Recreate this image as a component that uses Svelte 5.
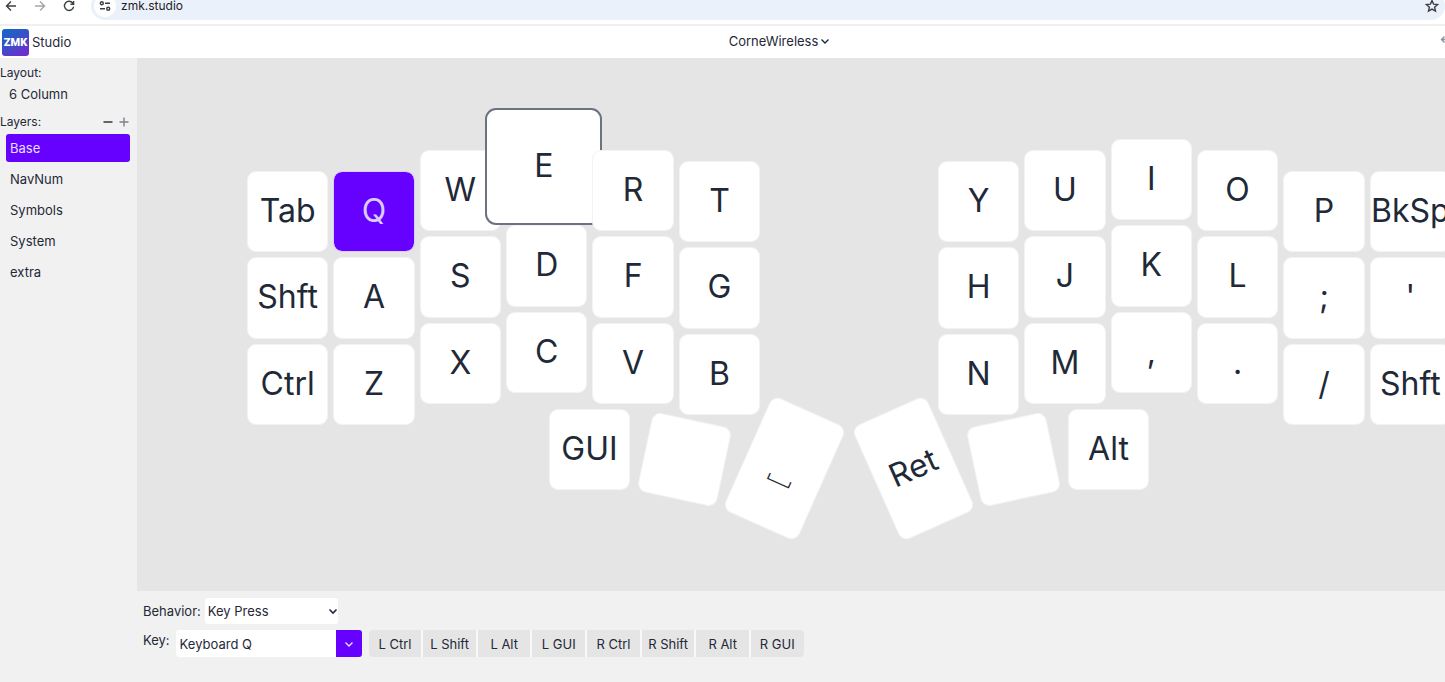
<script>
  const modifiers = ['L Ctrl', 'L Shift', 'L Alt', 'L GUI', 'R Ctrl', 'R Shift', 'R Alt', 'R GUI'];
  const layers = ['Base', 'NavNum', 'Symbols', 'System', 'extra'];

  // stagger is the drop of the column, from 0 (highest) to 3
  const columns = [
    { stagger: 3, keys: ['Tab', 'Shft', 'Ctrl'] },
    { stagger: 3, keys: ['Q', 'A', 'Z'] },
    { stagger: 1, keys: ['W', 'S', 'X'] },
    { stagger: 0, keys: ['E', 'D', 'C'] },
    { stagger: 1, keys: ['R', 'F', 'V'] },
    { stagger: 2, keys: ['T', 'G', 'B'] },
    { stagger: 0, keys: [] },
    { stagger: 0, keys: [] },
    { stagger: 2, keys: ['Y', 'H', 'N'] },
    { stagger: 1, keys: ['U', 'J', 'M'] },
    { stagger: 0, keys: ['I', 'K', ','] },
    { stagger: 1, keys: ['O', 'L', '.'] },
    { stagger: 3, keys: ['P', ';', '/'] },
    { stagger: 3, keys: ['BkSp', "'", 'Shft'] }
  ];

  let selectedLayer = $state('Base');
  let selectedKey = $state('Q');
  let raisedKey = $state('E');
  let keyName = $state('Keyboard Q');
</script>

<div class="page">
  <div class="toolbar">
    <button class="icon-button" aria-label="Back">
      <svg viewBox="0 0 12 12" width="12" height="12"><path d="M11 6H1.5M6 1.5 1.5 6 6 10.5" /></svg>
    </button>
    <button class="icon-button dim" aria-label="Forward">
      <svg viewBox="0 0 12 12" width="12" height="12"><path d="M1 6h9.5M6 1.5 10.5 6 6 10.5" /></svg>
    </button>
    <button class="icon-button" aria-label="Reload">
      <svg viewBox="0 0 12 12" width="12" height="12"><path d="M9.8 3.2A4.6 4.6 0 1 0 10.6 6.6M10.6 1v3.2H7.4" /></svg>
    </button>
    <div class="address">
      <button class="site-info" aria-label="Site information">
        <svg viewBox="0 0 12 12" width="12" height="12">
          <circle cx="2.8" cy="3.3" r="1.5" /><path d="M6 3.3h5M1 8.7h5" /><circle cx="9.2" cy="8.7" r="1.5" />
        </svg>
      </button>
      <span class="url">zmk.studio</span>
      <button class="icon-button" aria-label="Bookmark">
        <svg viewBox="0 0 14 14" width="14" height="14"><path d="M7 1.5 8.6 5.2l4 .35-3 2.65.9 3.9L7 10.05 3.5 12.1l.9-3.9-3-2.65 4-.35z" /></svg>
      </button>
    </div>
  </div>

  <header class="header">
    <div class="brand">
      <span class="logo">ZMK</span>
      <span>Studio</span>
    </div>
    <button class="device">
      CorneWireless
      <svg viewBox="0 0 10 10" width="10" height="10"><path d="M1.5 3.5 5 7l3.5-3.5" /></svg>
    </button>
    <button class="undo" aria-label="Undo">
      <svg viewBox="0 0 14 14" width="14" height="14"><path d="M4.5 1.5 1.5 4.5l3 3M1.5 4.5H9a3.5 3.5 0 0 1 0 8H5" /></svg>
    </button>
  </header>

  <main class="main">
    <aside class="sidebar">
      <h2 class="label">Layout:</h2>
      <button class="layout">6 Column</button>
      <div class="layers-head">
        <h2 class="label">Layers:</h2>
        <button class="icon-button" aria-label="Remove layer">
          <svg viewBox="0 0 10 10" width="10" height="10"><path d="M0.5 5h9" /></svg>
        </button>
        <button class="icon-button light" aria-label="Add layer">
          <svg viewBox="0 0 10 10" width="10" height="10"><path d="M0.5 5h9M5 0.5v9" /></svg>
        </button>
      </div>
      <ul class="layers">
        {#each layers as layer}
          <li>
            <button class="layer" class:active={layer === selectedLayer} onclick={() => (selectedLayer = layer)}>{layer}</button>
          </li>
        {/each}
      </ul>
    </aside>

    <div class="content">
      <section class="canvas">
        <div class="keyboard">
          <div class="columns">
            {#each columns as column}
              <div class="column stagger-{column.stagger}">
                {#each column.keys as key}
                  <div class="slot">
                    <button
                      class="key"
                      class:selected={key === selectedKey}
                      class:raised={key === raisedKey}
                      onclick={() => (selectedKey = key)}>{key}</button>
                  </div>
                {/each}
              </div>
            {/each}
          </div>
          <div class="thumbs">
            <div class="cluster">
              <button class="key thumb">GUI</button>
              <button class="key thumb inner tilt-right" aria-label="Layer"></button>
              <button class="key thumb tall tall-right"><span class="space">␣</span></button>
            </div>
            <div class="cluster">
              <button class="key thumb tall tall-left">Ret</button>
              <button class="key thumb inner tilt-left" aria-label="Layer"></button>
              <button class="key thumb">Alt</button>
            </div>
          </div>
        </div>
      </section>

      <section class="binding">
        <div class="row">
          <label for="behavior">Behavior:</label>
          <div class="select">
            <select id="behavior">
              <option>Key Press</option>
            </select>
            <svg viewBox="0 0 10 10" width="10" height="10"><path d="M1.5 3.5 5 7l3.5-3.5" /></svg>
          </div>
        </div>
        <div class="row key-row">
          <label for="key">Key:</label>
          <div class="combo">
            <input id="key" type="text" bind:value={keyName} />
            <button aria-label="Show keys">
              <svg viewBox="0 0 10 10" width="10" height="10"><path d="M1.5 3.5 5 7l3.5-3.5" /></svg>
            </button>
          </div>
          <div class="modifiers">
            {#each modifiers as modifier}
              <button>{modifier}</button>
            {/each}
          </div>
        </div>
      </section>
    </div>
  </main>
</div>

<style>
  :global(body) {
    margin: 0;
    overflow: hidden;
  }

  .page {
    display: flex;
    flex-direction: column;
    height: 100vh;
    overflow: hidden;
    background: #f1f1f1;
    color: #1f2937;
    font-family: Inter, 'Liberation Sans', sans-serif;
    font-size: 13px;
    line-height: 20px;
  }

  button,
  input,
  select {
    margin: 0;
    padding: 0;
    border: 0;
    background: none;
    color: inherit;
    font: inherit;
    white-space: nowrap;
  }

  svg {
    display: block;
    flex: none;
    fill: none;
    stroke: currentColor;
    stroke-width: 1.4;
  }

  /* browser bar */
  .toolbar {
    display: flex;
    flex: none;
    align-items: center;
    gap: 17px;
    height: 28px;
    margin-top: -8px;
    padding: 0 0 4px 5px;
    border-bottom: 2px solid #efefef;
    background: #fff;
    color: #3c4043;
  }

  .dim {
    color: #a3a5a8;
  }

  .address {
    display: flex;
    flex: 1;
    align-items: center;
    height: 28px;
    margin-left: -1px;
    padding: 0 6px 0 3px;
    border-radius: 14px;
    background: #eaf1fb;
  }

  .site-info {
    display: grid;
    place-items: center;
    width: 22px;
    height: 22px;
    border-radius: 11px;
    background: #fff;
  }

  .url {
    flex: 1;
    margin-left: 5px;
    color: #1f2023;
    font-size: 12px;
    line-height: 12px;
  }

  .header {
    display: grid;
    grid-template-columns: 1fr auto 1fr;
    flex: none;
    align-items: center;
    height: 32px;
    background: #fff;
  }

  .brand {
    display: flex;
    align-items: center;
    gap: 3px;
    padding-left: 2px;
  }

  .logo {
    width: 27px;
    height: 27px;
    border-radius: 3px;
    background: linear-gradient(150deg, #0f6ac4, #3f4cc8 50%, #7a26cf);
    color: #fff;
    font-family: Roboto, sans-serif;
    font-size: 11px;
    font-weight: 900;
    line-height: 27px;
    text-align: center;
  }

  .device {
    display: flex;
    align-items: center;
    gap: 2px;
    margin-left: 114px;
    padding-bottom: 2px;
  }

  .undo {
    justify-self: end;
    margin-right: -9px;
    color: #8f949b;
  }

  .main {
    display: flex;
    flex: 1;
    min-height: 0;
  }

  .sidebar {
    flex: none;
    width: 137px;
    padding-top: 5px;
    box-sizing: border-box;
  }

  .label {
    margin: 0;
    font-size: 12px;
    font-weight: 400;
  }

  .layout {
    display: block;
    margin: 1px 0 8px 9px;
  }

  .layers-head {
    display: flex;
    align-items: center;
    gap: 6px;
    padding-right: 8px;
  }

  .layers-head .label {
    flex: 1;
  }

  .light {
    color: #7b818b;
  }

  .layers {
    display: flex;
    flex-direction: column;
    gap: 3px;
    margin: 2px 7px 0 6px;
    padding: 0;
    list-style: none;
  }

  .layer {
    display: block;
    width: 100%;
    height: 28px;
    padding-left: 4px;
    border-radius: 3px;
    text-align: left;
  }

  .layer.active {
    background: #60f;
    color: #e5e0ff;
  }

  .content {
    display: flex;
    flex: 1;
    flex-direction: column;
    min-width: 0;
  }

  .canvas {
    flex: 1;
    min-height: 0;
    padding: 81px 0 0 110px;
    overflow: hidden;
    background: #e5e5e5;
  }

  .keyboard {
    width: 1204px;
  }

  .columns {
    display: grid;
    grid-template-columns: repeat(14, 1fr);
    align-items: start;
    gap: 5px;
  }

  .column {
    display: grid;
    grid-template-rows: repeat(3, 1fr);
    gap: 5px;
    min-width: 0;
    height: 254px;
  }

  .stagger-1 {
    margin-top: 11px;
  }

  .stagger-2 {
    margin-top: 22px;
  }

  .stagger-3 {
    margin-top: 32px;
  }

  .slot {
    position: relative;
    display: grid;
    min-width: 0;
  }

  .key {
    display: flex;
    align-items: center;
    justify-content: center;
    min-width: 0;
    box-sizing: border-box;
    padding-bottom: 1px;
    border: 1px solid #f3f3f3;
    border-radius: 9px;
    background: #fff;
    font-size: 32px;
    line-height: 40px;
  }

  .key.selected {
    border-color: #d9ccff;
    background: #60f;
    background-clip: padding-box;
    color: #d9ccff;
  }

  .key.raised {
    position: absolute;
    inset: -31px -15px -5px -21px;
    border: 2px solid #6b7280;
    border-radius: 11px;
  }

  .thumbs {
    display: flex;
    justify-content: center;
    gap: 48px;
    margin-top: -16px;
  }

  .cluster {
    display: flex;
    align-items: flex-start;
    gap: 14px;
  }

  .thumb {
    width: 81px;
    height: 81px;
  }

  .inner {
    margin-top: 10px;
  }

  .tall {
    height: 125px;
    margin-top: -3px;
  }

  .tilt-right {
    margin-right: 5px;
    transform: rotate(12deg);
  }

  .tilt-left {
    margin-left: 5px;
    transform: rotate(-12deg);
  }

  .tall-right {
    transform: rotate(24deg);
  }

  .tall-left {
    transform: rotate(-24deg);
  }

  .space {
    font-family: 'Noto Sans CJK JP', sans-serif;
    font-weight: 700;
  }

  .binding {
    display: flex;
    flex: none;
    flex-direction: column;
    gap: 6px;
    padding: 7px 6px 25px;
  }

  .row {
    display: flex;
    align-items: center;
    gap: 4px;
  }

  .key-row {
    align-items: flex-start;
    gap: 6px;
  }

  .select {
    display: flex;
    align-items: center;
    width: 133px;
    border-radius: 3px;
    background: #fff;
  }

  .select select {
    flex: 1;
    height: 26px;
    margin-right: -13px;
    padding: 0 16px 0 3px;
    appearance: none;
  }

  .select svg {
    pointer-events: none;
    stroke-width: 1.6;
  }

  .combo {
    display: flex;
    height: 27px;
    overflow: hidden;
    border-radius: 3px;
  }

  .combo input {
    width: 156px;
    padding-left: 4px;
    background: #fff;
  }

  .combo button {
    display: grid;
    place-items: center;
    width: 26px;
    background: #60f;
    color: #e5e0ff;
  }

  .modifiers {
    display: grid;
    grid-template-columns: repeat(8, 1fr);
    gap: 2px;
    width: 435px;
    height: 27px;
    margin-left: 1px;
    overflow: hidden;
    border-radius: 4px;
    background: #f9f9f9;
  }

  .modifiers button {
    background: #e5e5e5;
  }
</style>
